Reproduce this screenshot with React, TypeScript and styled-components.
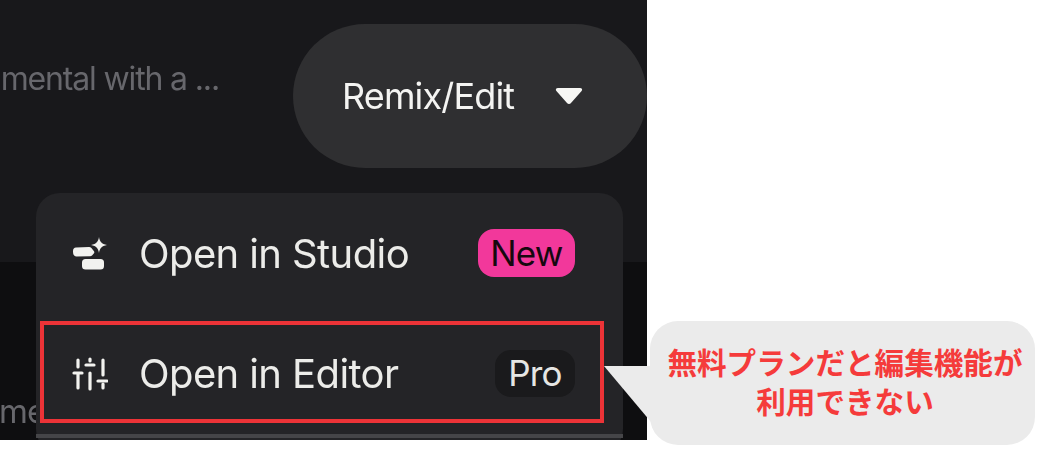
import React from "react";
import styled, { createGlobalStyle } from "styled-components";

const Global = createGlobalStyle`
  html, body { margin: 0; padding: 0; background: #fff; }
  body { width: 1054px; height: 452px; overflow: hidden; font-family: Inter, "Liberation Sans", sans-serif; }
`;

const Stage = styled.div`
  position: relative;
  width: 1054px;
  height: 452px;
  background: #fff;
  overflow: hidden;
`;

const Panel = styled.section`
  position: relative;
  width: 647px;
  height: 440px;
  display: flex;
  flex-direction: column;
  overflow: hidden;
  background: #0e0e10;
`;

const Header = styled.header`
  height: 262px;
  box-sizing: border-box;
  padding-top: 24px;
  display: flex;
  align-items: flex-start;
  justify-content: flex-end;
  gap: 74px;
  background: #18181b;
`;

const Description = styled.p`
  margin: 34px 0 0;
  width: 219px;
  text-align: right;
  white-space: nowrap;
  color: #67676c;
  font-size: 32px;
  line-height: 42px;
  letter-spacing: -1.15px;
  filter: blur(0.4px);
`;

const RemixButton = styled.button`
  width: 354px;
  height: 144px;
  flex: none;
  border: 0;
  border-radius: 72px;
  padding: 0 64px 0 49px;
  display: flex;
  align-items: center;
  justify-content: space-between;
  background: #2f2f31;
  color: #f4f4f2;
  font-family: inherit;
  font-size: 36px;
  letter-spacing: -0.85px;
`;

const ButtonLabel = styled.span`
  filter: blur(0.3px);
`;

const Footer = styled.div`
  flex: 1;
  display: flex;
  align-items: flex-end;
  padding-bottom: 8px;
`;

const FooterText = styled.span`
  color: #67676c;
  font-size: 33px;
  line-height: 42px;
  letter-spacing: -1px;
  margin-left: -1px;
  filter: blur(0.4px);
`;

const Menu = styled.div`
  position: absolute;
  left: 36px;
  top: 193px;
  width: 587px;
  height: 260px;
  box-sizing: border-box;
  padding: 0 0 0 4px;
  border-radius: 24px;
  background: #242427;
  display: flex;
  flex-direction: column;
`;

const MenuRow = styled.div<{ $highlighted?: boolean }>`
  width: 564px;
  height: ${(p) => (p.$highlighted ? "102px" : "120px")};
  margin-bottom: ${(p) => (p.$highlighted ? "0" : "8px")};
  box-sizing: border-box;
  display: flex;
  align-items: center;
  padding: ${(p) => (p.$highlighted ? "2px 25px 0 28px" : "0 29px 0 32px")};
  border: ${(p) => (p.$highlighted ? "4px solid #ec3337" : "0")};
`;

const IconSlot = styled.span`
  width: 36px;
  height: 36px;
  flex: none;
  display: flex;
  align-items: center;
  justify-content: center;
  margin-right: 31px;
  color: #f2f2ef;
  filter: blur(0.3px);
`;

const RowLabel = styled.span`
  flex: 1;
  color: #ecece9;
  font-size: 40px;
  letter-spacing: -0.6px;
  white-space: nowrap;
  filter: blur(0.3px);
`;

const NewBadge = styled.span`
  width: 97px;
  height: 48px;
  border-radius: 16px;
  display: flex;
  align-items: center;
  justify-content: center;
  background: #f2389b;
  color: #16080f;
  font-size: 35px;
  letter-spacing: -0.8px;
`;

const ProBadge = styled.span`
  width: 80px;
  height: 47px;
  border-radius: 16px;
  display: flex;
  align-items: center;
  justify-content: center;
  background: #1a1a1c;
  color: #e6e6e3;
  font-size: 35px;
  letter-spacing: -0.8px;
`;

const MenuDivider = styled.div`
  height: 4px;
  margin: 11px 0 0 -4px;
  background: #454548;
`;

const Callout = styled.aside`
  position: absolute;
  left: 650px;
  top: 321px;
  width: 385px;
  height: 124px;
  box-sizing: border-box;
  padding: 0 0 4px 5px;
  border-radius: 28px;
  background: #ebebeb;
  display: flex;
  align-items: center;
  justify-content: center;
  text-align: center;
  color: #f53b3b;
  font-family: "Noto Sans CJK JP", sans-serif;
  font-weight: 700;
  font-size: 29.6px;
  line-height: 39px;
`;

const Tail = styled.svg`
  position: absolute;
  left: -46px;
  top: 45px;
`;

const StudioIcon = () => (
  <svg width="36" height="36" viewBox="0 0 36 36" fill="currentColor">
    <path d="M4 12.500l13-.5c1 0 1.800.3 2.400 1l2.600 3.300c.5.700.5 1.300 0 1.900l-2 2.300c-.5.500-1.100.8-1.900.8L4.500 21.500C2.500 21.500 1 20 1 17v-1c0-2 1.200-3.400 3-3.500z" />
    <rect x="10" y="24" width="22" height="10.500" rx="3.500" />
    <path d="M27 2c.8 4.800 2.400 6.800 8 8-5.600 1.200-7.200 3.200-8 8-.8-4.800-2.400-6.800-8-8 5.600-1.200 7.200-3.200 8-8z" />
  </svg>
);

const SlidersIcon = () => (
  <svg width="36" height="36" viewBox="0 0 36 36" fill="none" stroke="currentColor" strokeWidth="3.200" strokeLinecap="round">
    <path d="M6 5v7M6 19v14" />
    <path d="M2 18h8" />
    <path d="M18 4v2M18 18v16" />
    <path d="M14 10h8" />
    <path d="M31 5v15M31 29v4" />
    <path d="M26 26h9" />
  </svg>
);

export default function App() {
  return (
    <Stage>
      <Global />
      <Panel>
        <Header>
          <Description>mental with a ...</Description>
          <RemixButton>
            <ButtonLabel>Remix/Edit</ButtonLabel>
            <svg width="28" height="18" viewBox="0 0 28 18" fill="#f7f7f4">
              <path d="M3 1h22c2 0 2.800 1.600 1.600 3.100L16 16c-1 1.300-3 1.300-4 0L1.400 4.100C.2 2.600 1 1 3 1z" />
            </svg>
          </RemixButton>
        </Header>
        <Footer>
          <FooterText>me</FooterText>
        </Footer>
        <Menu>
          <MenuRow>
            <IconSlot><StudioIcon /></IconSlot>
            <RowLabel>Open in Studio</RowLabel>
            <NewBadge>New</NewBadge>
          </MenuRow>
          <MenuRow $highlighted>
            <IconSlot><SlidersIcon /></IconSlot>
            <RowLabel>Open in Editor</RowLabel>
            <ProBadge>Pro</ProBadge>
          </MenuRow>
          <MenuDivider />
        </Menu>
      </Panel>
      <Callout>
        <Tail width="47" height="56" viewBox="0 0 47 56" fill="#ebebeb">
          <path d="M0 0H47V56z" />
        </Tail>
        <span>無料プランだと編集機能が<br />利用できない</span>
      </Callout>
    </Stage>
  );
}
